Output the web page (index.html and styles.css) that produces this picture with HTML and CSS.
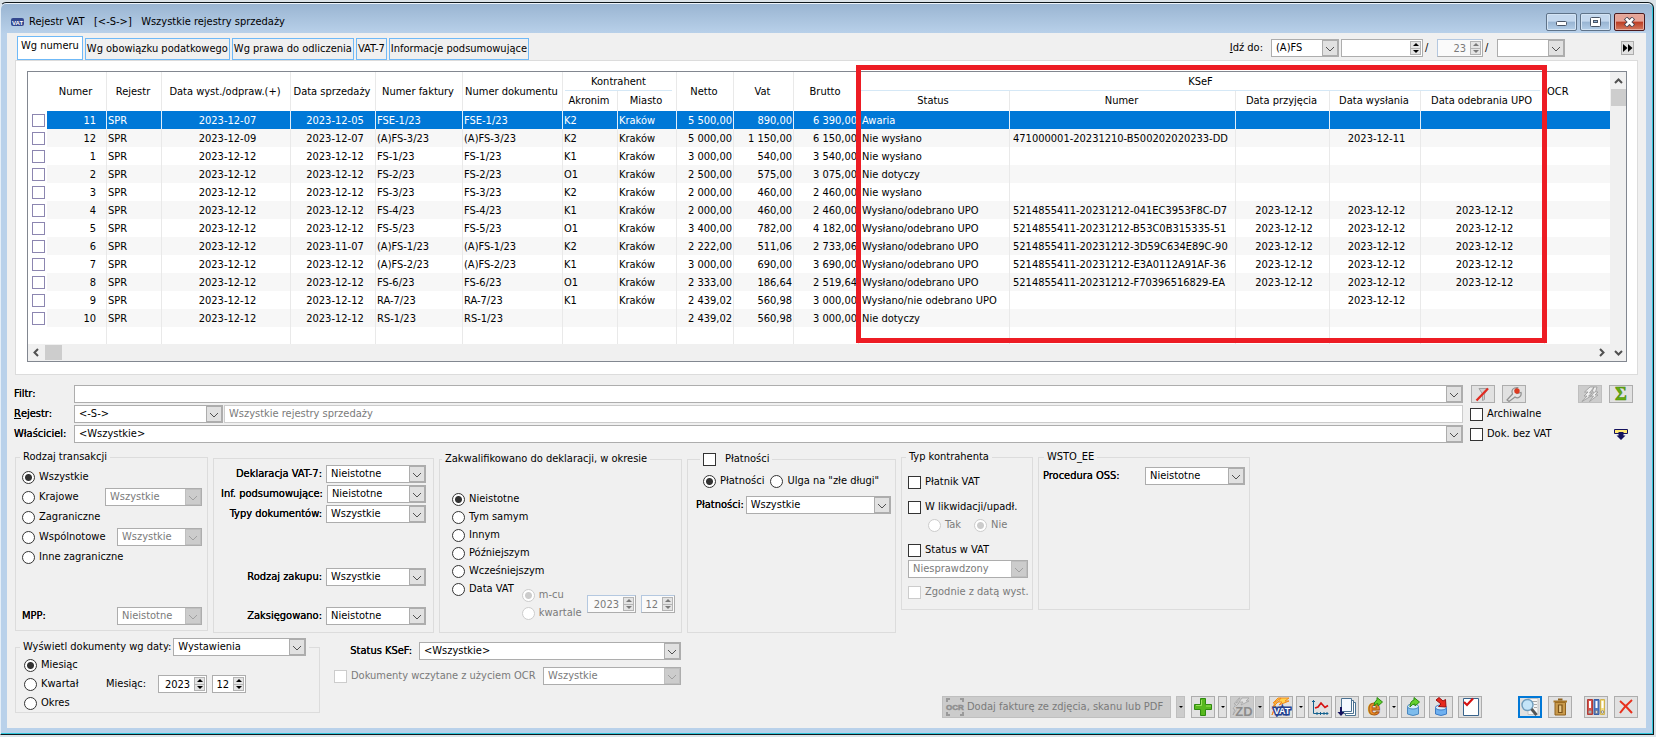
FILE: index.html
```html
<!DOCTYPE html>
<html lang="pl">
<head>
<meta charset="utf-8">
<title>Rejestr VAT</title>
<link rel="stylesheet" href="styles.css">
</head>
<body>
<div class="window">
<header class="titlebar">
  <svg class="app-icon" width="13" height="10" viewBox="0 0 13 10"><rect y="1" width="13" height="8" rx="2" fill="#34488f"/><text x="6.500" y="7.500" class="ico-text" font-size="6" fill="#fff" text-anchor="middle">VAT</text></svg>
  <h1>Rejestr VAT &nbsp; [&lt;-S-&gt;] &nbsp; Wszystkie rejestry sprzedaży</h1>
  <div class="win-buttons">
    <button aria-label="Minimalizuj"><svg width="13" height="10" viewBox="0 0 13 10"><rect x="1.500" y="4.500" width="10" height="4" rx="1" fill="#fff" stroke="#4a5566"/></svg></button>
    <button aria-label="Maksymalizuj"><svg width="13" height="10" viewBox="0 0 13 10"><rect x="1.500" y=".500" width="10" height="9" rx="1" fill="#fff" stroke="#4a5566"/><rect x="4.500" y="3.500" width="4" height="2" fill="#8fb0d4" stroke="#4a5566"/></svg></button>
    <button class="close" aria-label="Zamknij"><svg width="13" height="10" viewBox="0 0 13 10"><path d="M2.500 1l8 8M10.500 1l-8 8" stroke="#4a4552" stroke-width="4.500"/><path d="M3 1.500l7 7M10 1.500l-7 7" stroke="#fff" stroke-width="2.500"/></svg></button>
  </div>
</header>
<main class="content">
<div class="top-row">
  <nav class="tabs">
    <button class="tab active">Wg numeru</button>
    <button class="tab">Wg obowiązku podatkowego</button>
    <button class="tab">Wg prawa do odliczenia</button>
    <button class="tab">VAT-7</button>
    <button class="tab">Informacje podsumowujące</button>
  </nav>
  <div class="goto">
    <label for="goto-kind"><u>I</u>dź do:</label>
    <select id="goto-kind" class="w-kind"><option>(A)FS</option></select>
    <span class="spin w-no"><input type="text" aria-label="Numer"><span class="arrows"><button aria-label="Więcej"></button><button aria-label="Mniej"></button></span></span>
    <span class="slash">/</span>
    <span class="spin off w-yr"><input type="text" value="23" aria-label="Rok" disabled><span class="arrows"><button disabled aria-label="Więcej"></button><button disabled aria-label="Mniej"></button></span></span>
    <span class="slash">/</span>
    <select class="w-kind" aria-label="Seria"><option></option></select>
    <button class="ff" aria-label="Dalej"><svg width="11" height="10" viewBox="0 0 11 10"><path d="M1 1v8l4.500-4zM6 1v8l4.500-4z" fill="#000"/></svg></button>
  </div>
</div>
<section class="pane">
<div class="grid">
<div class="table-area">
<table>
<colgroup><col class="c-cb"><col class="c-num"><col class="c-rej"><col class="c-dw"><col class="c-ds"><col class="c-nf"><col class="c-nd"><col class="c-ak"><col class="c-mi"><col class="c-ne"><col class="c-vat"><col class="c-br"><col class="c-st"><col class="c-kn"><col class="c-dp"><col class="c-wy"><col class="c-upo"><col></colgroup>
<thead>
<tr><th rowspan="2" class="nb"></th><th rowspan="2">Numer</th><th rowspan="2">Rejestr</th><th rowspan="2">Data wyst./odpraw.(+)</th><th rowspan="2">Data sprzedaży</th><th rowspan="2">Numer faktury</th><th rowspan="2">Numer dokumentu</th><th colspan="2" class="group"><span>Kontrahent</span></th><th rowspan="2">Netto</th><th rowspan="2">Vat</th><th rowspan="2">Brutto</th><th colspan="5" class="group"><span>KSeF</span></th><th rowspan="2" class="ocr nb">OCR</th></tr>
<tr><th>Akronim</th><th>Miasto</th><th>Status</th><th>Numer</th><th>Data przyjęcia</th><th>Data wysłania</th><th>Data odebrania UPO</th></tr>
</thead>
<tbody>
<tr class="selected"><td><input type="checkbox" aria-label="11"><td>11<td>SPR<td>2023-12-07<td>2023-12-05<td>FSE-1/23<td>FSE-1/23<td>K2<td>Kraków<td>5 500,00<td>890,00<td>6 390,00<td>Awaria<td><td><td><td><td></tr>
<tr><td><input type="checkbox" aria-label="12"><td>12<td>SPR<td>2023-12-09<td>2023-12-07<td>(A)FS-3/23<td>(A)FS-3/23<td>K2<td>Kraków<td>5 000,00<td>1 150,00<td>6 150,00<td>Nie wysłano<td>471000001-20231210-B500202020233-DD<td><td>2023-12-11<td><td></tr>
<tr><td><input type="checkbox" aria-label="1"><td>1<td>SPR<td>2023-12-12<td>2023-12-12<td>FS-1/23<td>FS-1/23<td>K1<td>Kraków<td>3 000,00<td>540,00<td>3 540,00<td>Nie wysłano<td><td><td><td><td></tr>
<tr><td><input type="checkbox" aria-label="2"><td>2<td>SPR<td>2023-12-12<td>2023-12-12<td>FS-2/23<td>FS-2/23<td>O1<td>Kraków<td>2 500,00<td>575,00<td>3 075,00<td>Nie dotyczy<td><td><td><td><td></tr>
<tr><td><input type="checkbox" aria-label="3"><td>3<td>SPR<td>2023-12-12<td>2023-12-12<td>FS-3/23<td>FS-3/23<td>K2<td>Kraków<td>2 000,00<td>460,00<td>2 460,00<td>Nie wysłano<td><td><td><td><td></tr>
<tr><td><input type="checkbox" aria-label="4"><td>4<td>SPR<td>2023-12-12<td>2023-12-12<td>FS-4/23<td>FS-4/23<td>K1<td>Kraków<td>2 000,00<td>460,00<td>2 460,00<td>Wysłano/odebrano UPO<td>5214855411-20231212-041EC3953F8C-D7<td>2023-12-12<td>2023-12-12<td>2023-12-12<td></tr>
<tr><td><input type="checkbox" aria-label="5"><td>5<td>SPR<td>2023-12-12<td>2023-12-12<td>FS-5/23<td>FS-5/23<td>O1<td>Kraków<td>3 400,00<td>782,00<td>4 182,00<td>Wysłano/odebrano UPO<td>5214855411-20231212-B53C0B315335-51<td>2023-12-12<td>2023-12-12<td>2023-12-12<td></tr>
<tr><td><input type="checkbox" aria-label="6"><td>6<td>SPR<td>2023-12-12<td>2023-11-07<td>(A)FS-1/23<td>(A)FS-1/23<td>K2<td>Kraków<td>2 222,00<td>511,06<td>2 733,06<td>Wysłano/odebrano UPO<td>5214855411-20231212-3D59C634E89C-90<td>2023-12-12<td>2023-12-12<td>2023-12-12<td></tr>
<tr><td><input type="checkbox" aria-label="7"><td>7<td>SPR<td>2023-12-12<td>2023-12-12<td>(A)FS-2/23<td>(A)FS-2/23<td>K1<td>Kraków<td>3 000,00<td>690,00<td>3 690,00<td>Wysłano/odebrano UPO<td>5214855411-20231212-E3A0112A91AF-36<td>2023-12-12<td>2023-12-12<td>2023-12-12<td></tr>
<tr><td><input type="checkbox" aria-label="8"><td>8<td>SPR<td>2023-12-12<td>2023-12-12<td>FS-6/23<td>FS-6/23<td>O1<td>Kraków<td>2 333,00<td>186,64<td>2 519,64<td>Wysłano/odebrano UPO<td>5214855411-20231212-F70396516829-EA<td>2023-12-12<td>2023-12-12<td>2023-12-12<td></tr>
<tr><td><input type="checkbox" aria-label="9"><td>9<td>SPR<td>2023-12-12<td>2023-12-12<td>RA-7/23<td>RA-7/23<td>K1<td>Kraków<td>2 439,02<td>560,98<td>3 000,00<td>Wysłano/nie odebrano UPO<td><td><td>2023-12-12<td><td></tr>
<tr><td><input type="checkbox" aria-label="10"><td>10<td>SPR<td>2023-12-12<td>2023-12-12<td>RS-1/23<td>RS-1/23<td><td><td>2 439,02<td>560,98<td>3 000,00<td>Nie dotyczy<td><td><td><td><td></tr>
<tr class="rest"><td><td><td><td><td><td><td><td><td><td><td><td><td><td><td><td><td><td></tr>
</tbody>
</table>
<div class="highlight"></div>
</div>
<div class="vscroll"><svg width="9" height="6" viewBox="0 0 9 6"><path d="M1 5l3.500-3.500L8 5" stroke="#505050" stroke-width="2" fill="none"/></svg><span class="thumb"></span></div>
<div class="hscroll"><svg width="6" height="9" viewBox="0 0 6 9"><path d="M5 1L1.500 4.500 5 8" stroke="#505050" stroke-width="2" fill="none"/></svg><span class="thumb"></span><svg class="end" width="6" height="9" viewBox="0 0 6 9"><path d="M1 1l3.500 3.500L1 8" stroke="#505050" stroke-width="2" fill="none"/></svg></div>
<div class="corner"><svg width="9" height="6" viewBox="0 0 9 6"><path d="M1 1l3.500 3.500L8 1" stroke="#505050" stroke-width="2" fill="none"/></svg></div>
</div>
</section>

<section class="filters">
  <label class="strong" for="f-filtr">Filtr:</label>
  <select id="f-filtr"><option></option></select>
  <div class="side tools">
    <button class="sq" aria-label="Wyczyść filtr"><svg width="16" height="15" viewBox="0 0 16 15"><path d="M4 1.500h9L9.500 7v5.500l-2 1V7z" fill="#cfcfcf" stroke="#a0a0a0"/><path d="M1.500 13.500L13 1.500" stroke="#e02a20" stroke-width="2.200"/></svg></button>
    <button class="sq" aria-label="Konstruktor filtra"><svg width="18" height="16" viewBox="0 0 18 16"><path d="M2 14l5.500-6C6 4 8 1.500 12.500 1.500L10 4.500l2 3 4-1c1 4-3 6.500-6 4.500L4 15.500z" fill="#e4e4e4" stroke="#909090" stroke-width="1.200"/><circle cx="12" cy="5" r="2.700" fill="#dd3a20"/></svg></button>
    <button class="sq off push" aria-label="Filtruj" disabled><svg width="20" height="16" viewBox="0 0 20 16"><path d="M10 1L4.500 6H8l-4 4h3l-5 5.500L11 10H8.500L12 7H9.500L14 1zM17 1h-3l-2 5h2.500l-3.500 4h2.500l-4 5.500L18 9h-3l3-3h-2.500z" fill="#eee" stroke="#999" stroke-width=".800"/></svg></button>
    <button class="sq" aria-label="Suma"><svg width="14" height="16" viewBox="0 0 14 16"><text x="7" y="14" class="ico-serif" font-size="18" fill="#64ac0e" stroke="#4c8c08" stroke-width=".600" text-anchor="middle">Σ</text></svg></button>
  </div>
  <label class="strong" for="f-rejestr"><u>R</u>ejestr:</label>
  <div class="pair"><select id="f-rejestr"><option>&lt;-S-&gt;</option></select><input type="text" value="Wszystkie rejestry sprzedaży" aria-label="Nazwa rejestru" disabled></div>
  <div class="side"><label><input type="checkbox">Archiwalne</label></div>
  <label class="strong" for="f-wl">Właściciel:</label>
  <select id="f-wl"><option>&lt;Wszystkie&gt;</option></select>
  <div class="side"><label><input type="checkbox">Dok. bez VAT</label>
    <button class="bare push" aria-label="Zwiń"><svg width="16" height="13" viewBox="0 0 16 13"><path d="M1.500 1.500h13v4h-13z" fill="#ffe873" stroke="#14125e"/><path d="M5.500 4h5v3.500h2L8 12 3.500 7.500h2z" fill="#14125e"/></svg></button></div>
</section>

<section class="panels">
  <fieldset class="panel p1"><legend>Rodzaj transakcji</legend>
    <div class="line"><label><input type="radio" name="rt" checked>Wszystkie</label></div>
    <div class="line"><label><input type="radio" name="rt">Krajowe</label><select class="push w-krj" aria-label="Krajowe" disabled><option>Wszystkie</option></select></div>
    <div class="line"><label><input type="radio" name="rt">Zagraniczne</label></div>
    <div class="line"><label><input type="radio" name="rt">Wspólnotowe</label><select class="push w-wsp" aria-label="Wspólnotowe" disabled><option>Wszystkie</option></select></div>
    <div class="line"><label><input type="radio" name="rt">Inne zagraniczne</label></div>
    <div class="line last"><label class="strong" for="mpp">MPP:</label><select id="mpp" class="push w-wsp" disabled><option>Nieistotne</option></select></div>
  </fieldset>
  <div class="panel p2">
    <div class="line"><label class="strong" for="d7">Deklaracja VAT-7:</label><select id="d7"><option>Nieistotne</option></select></div>
    <div class="line"><label class="strong" for="ip">Inf. podsumowujące:</label><select id="ip"><option>Nieistotne</option></select></div>
    <div class="line"><label class="strong" for="td">Typy dokumentów:</label><select id="td"><option>Wszystkie</option></select></div>
    <div class="line second"><label class="strong" for="rz">Rodzaj zakupu:</label><select id="rz"><option>Wszystkie</option></select></div>
    <div class="line last"><label class="strong" for="zk">Zaksięgowano:</label><select id="zk"><option>Nieistotne</option></select></div>
  </div>
  <fieldset class="panel p3 low"><legend>Zakwalifikowano do deklaracji, w okresie</legend>
    <div class="line"><label><input type="radio" name="zk" checked>Nieistotne</label></div>
    <div class="line"><label><input type="radio" name="zk">Tym samym</label></div>
    <div class="line"><label><input type="radio" name="zk">Innym</label></div>
    <div class="line"><label><input type="radio" name="zk">Późniejszym</label></div>
    <div class="line"><label><input type="radio" name="zk">Wcześniejszym</label></div>
    <div class="vat-date">
      <div class="line"><label><input type="radio" name="zk">Data VAT</label></div>
      <div class="sub"><div class="line"><label class="off"><input type="radio" name="mk" checked disabled>m-cu</label></div><div class="line"><label class="off"><input type="radio" name="mk" disabled>kwartale</label></div></div>
      <div class="spins">
        <span class="spin off w-year"><input type="text" value="2023" aria-label="Rok VAT" disabled><span class="arrows"><button disabled aria-label="Więcej"></button><button disabled aria-label="Mniej"></button></span></span>
        <span class="spin off w-mon"><input type="text" value="12" aria-label="Miesiąc VAT" disabled><span class="arrows"><button disabled aria-label="Więcej"></button><button disabled aria-label="Mniej"></button></span></span>
      </div>
    </div>
  </fieldset>
  <fieldset class="panel p4 low"><legend><label><input type="checkbox">Płatności</label></legend>
    <div class="line"><label><input type="radio" name="pl" checked>Płatności</label><label><input type="radio" name="pl">Ulga na "złe długi"</label></div>
    <div class="line pay"><label class="strong" for="pls">Płatności:</label><select id="pls"><option>Wszystkie</option></select></div>
  </fieldset>
  <fieldset class="panel p5"><legend>Typ kontrahenta</legend>
    <div class="line"><label><input type="checkbox">Płatnik VAT</label></div>
    <div class="line likw"><label><input type="checkbox">W likwidacji/upadł.</label></div>
    <div class="line yesno"><label class="off"><input type="radio" name="lk" disabled>Tak</label><label class="off"><input type="radio" name="lk" checked disabled>Nie</label></div>
    <div class="line likw"><label><input type="checkbox">Status w VAT</label></div>
    <div class="line"><select aria-label="Status w VAT" disabled><option>Niesprawdzony</option></select></div>
    <div class="line wyst"><label class="off"><input type="checkbox" disabled>Zgodnie z datą wyst.</label></div>
  </fieldset>
  <fieldset class="panel p6"><legend>WSTO_EE</legend>
    <div class="line"><label class="strong" for="oss">Procedura OSS:</label><select id="oss" class="push"><option>Nieistotne</option></select></div>
  </fieldset>
</section>

<section class="bottom">
  <fieldset class="panel p7"><legend><label for="wd">Wyświetl dokumenty wg daty:</label><select id="wd"><option>Wystawienia</option></select></legend>
    <div class="period">
      <div class="choices">
        <div class="line"><label><input type="radio" name="ok" checked>Miesiąc</label></div>
        <div class="line"><label><input type="radio" name="ok">Kwartał</label></div>
        <div class="line"><label><input type="radio" name="ok">Okres</label></div>
      </div>
      <label for="rok">Miesiąc:</label>
      <span class="spin w-year"><input id="rok" type="text" value="2023"><span class="arrows"><button aria-label="Więcej"></button><button aria-label="Mniej"></button></span></span>
      <span class="spin w-mon"><input type="text" value="12" aria-label="Miesiąc"><span class="arrows"><button aria-label="Więcej"></button><button aria-label="Mniej"></button></span></span>
    </div>
  </fieldset>
  <div class="ksef">
    <div class="line"><label class="strong" for="sk">Status KSeF:</label><select id="sk" class="w-ksef"><option>&lt;Wszystkie&gt;</option></select></div>
    <div class="line"><label class="off"><input type="checkbox" disabled>Dokumenty wczytane z użyciem OCR</label><select class="w-ocr push" aria-label="OCR" disabled><option>Wszystkie</option></select></div>
  </div>
  <div class="toolbar">
    <button class="ocr-btn" disabled><svg width="20" height="20" viewBox="0 0 20 20"><path d="M2 5V2h3M15 2h3v3M2 15v3h3M15 18h3v-3" stroke="#9a9a9a" stroke-width="2" fill="none"/><text x="10" y="13" class="ico-text" font-size="8" fill="#8f8f8f" stroke="#8f8f8f" stroke-width=".500" text-anchor="middle">OCR</text></svg>Dodaj fakturę ze zdjęcia, skanu lub PDF</button>
    <button class="drop off m5" aria-label="Opcje OCR" disabled></button>
    <button class="tool m6" aria-label="Dodaj"><svg width="20" height="20" viewBox="0 0 20 20"><path d="M7.500 1.500h5v6h6v5h-6v6h-5v-6h-6v-5h6z" fill="#57b81e" stroke="#2f8a10"/><path d="M8.500 3v5.500H3M13 9h5" stroke="#9be05c" fill="none"/></svg></button>
    <button class="drop m3" aria-label="Opcje dodawania"></button>
    <button class="tool off m3" aria-label="Złe długi" disabled><svg width="22" height="20" viewBox="0 0 22 20"><path d="M9 1L5 6h3l-4 4h3L2 18l2-6H2l3-5H3l5-6zM18 1h-7L8 5h4l-2 3 8-4h-3z" fill="#e0e0e0" stroke="#a4a4a4" stroke-width=".800"/><text x="13" y="19" class="ico-text" font-size="13" fill="#8c8c8c" stroke="#ccc" stroke-width="2" paint-order="stroke" text-anchor="middle">ZD</text></svg></button>
    <button class="drop off m1" aria-label="Opcje złych długów" disabled></button>
    <button class="tool m5" aria-label="VAT"><svg width="22" height="20" viewBox="0 0 22 20"><path d="M11 1L5 5h3L4 9h2L2 18l2-6H2l3-6H3l5-5zM19 1h-8L8 5h4L9 8l10-4h-4z" fill="#ffd34d" stroke="#f08a1c"/><text x="12" y="17" class="ico-text" font-size="9" fill="#fff" stroke="#23408f" stroke-width="3" paint-order="stroke" text-anchor="middle">VAT</text></svg></button>
    <button class="drop m3" aria-label="Opcje VAT"></button>
    <button class="tool m3" aria-label="Wykres"><svg width="20" height="20" viewBox="0 0 20 20"><path d="M3.500 3v13.500H18M2 5l1.500-1.500L5 5M16.500 15l1.500 1.500-1.500 1.500M7 15v3M10.500 15v3M14 15v3" stroke="#15628f" fill="none"/><path d="M5 11l3-1 3-4 4 4.500 3-2" stroke="#d61111" stroke-width="1.700" fill="none"/></svg></button>
    <button class="tool m3" aria-label="Dokumenty"><svg width="20" height="20" viewBox="0 0 20 20"><path d="M8.500 5.500h10v13h-10z" fill="#fff" stroke="#4a7191"/><path d="M6.500 3.500h10v13h-10z" fill="#fff" stroke="#4a7191"/><path d="M4.500 1.500h10v13h-10z" fill="#f4f8ff" stroke="#4a7191"/><path d="M3 10v5H.500L4 19l3.500-4H5v-5z" fill="#14125e"/></svg></button>
    <button class="tool m4" aria-label="E-deklaracja"><svg width="20" height="20" viewBox="0 0 20 20"><text x="9" y="18" class="ico-text" font-size="22" fill="#f0932c" stroke="#a8560c" stroke-width="1" text-anchor="middle">e</text><path d="M9 9q0-5 3-6V.500L17.500 5 13 9V6.500q-2.500 0-4 2.500z" fill="#63d02c" stroke="#2b8a12"/></svg></button>
    <button class="drop m2" aria-label="Opcje e-deklaracji"></button>
    <button class="tool m3" aria-label="Eksport"><svg width="20" height="20" viewBox="0 0 20 20"><path d="M4.500 9.500v7.500q5.500 3 11 0V9.500z" fill="#7ebcec" stroke="#4a88c0"/><ellipse cx="10" cy="9.500" rx="5.500" ry="2.500" fill="#d8ecfa" stroke="#4a88c0"/><path d="M7 10q0-6 4-7V.500L16.500 5 12 9V7q-3 0-5 3z" fill="#63d02c" stroke="#2b8a12"/></svg></button>
    <button class="tool m4" aria-label="Import"><svg width="20" height="20" viewBox="0 0 20 20"><path d="M4.500 10v7q5.500 3 11 0v-7z" fill="#6eb0f0" stroke="#3f7cc4"/><ellipse cx="10" cy="10.500" rx="5.500" ry="2.500" fill="#d8ecfa" stroke="#3f7cc4"/><path d="M5 3l3-2.500 4 3.500 2.500-1.500.500 7.500-7.500-.500L10 7z" fill="#e6281c" stroke="#9a1010"/></svg></button>
    <button class="tool m5" aria-label="Zaznacz"><svg width="20" height="20" viewBox="0 0 20 20"><path d="M3.500 1.500h15v17h-15z" fill="#fff" stroke="#38638c"/><path d="M4 5l3 3 6-6.500" stroke="#d61111" stroke-width="2.200" fill="none"/></svg></button>
    <button class="tool focus gap-xl" aria-label="Podgląd"><svg width="20" height="20" viewBox="0 0 20 20"><path d="M8 1.500h10v16H8z" fill="#f6f6f6" stroke="#c4c4c4"/><path d="M12 4.500h5M14 7.500h3M14 10.500h3" stroke="#aaa"/><circle cx="7.500" cy="8" r="5.500" fill="#c4e4f8" stroke="#6f9cbc" stroke-width="1.400"/><path d="M11.500 12l5 6" stroke="#555" stroke-width="2.800"/></svg></button>
    <button class="tool m6" aria-label="Usuń"><svg width="20" height="20" viewBox="0 0 20 20"><path d="M5 5.500h10.500v12.500H5z" fill="#c99a4c" stroke="#91631e"/><path d="M3.500 4.500h13.500" stroke="#a67628" stroke-width="2"/><path d="M8 2.500h4.500" stroke="#91631e" stroke-width="2"/><path d="M8.500 8v7.500h3.500V8z" fill="#e8c888" stroke="#7a5218" stroke-width="1.200"/></svg></button>
    <button class="tool gap-lg" aria-label="Segregatory"><svg width="20" height="20" viewBox="0 0 20 20"><path d="M1.500 2.500h5v15h-5z" fill="#d4544c" stroke="#b03c36"/><path d="M8 2.500h5v15H8z" fill="#4f78c0" stroke="#3a5ea4"/><path d="M14.500 2.500h4v15h-4z" fill="#f2dc80" stroke="#d2b450"/><path d="M3 4h2v7H3zM9.500 4h2v7h-2zM15.500 4h2v7h-2z" fill="#fff"/><circle cx="4" cy="15" r="1.300" fill="#eee" stroke="#888"/><circle cx="10.500" cy="15" r="1.300" fill="#eee" stroke="#888"/><circle cx="16.500" cy="15" r="1.300" fill="#eee" stroke="#888"/></svg></button>
    <button class="tool m6" aria-label="Zamknij okno"><svg width="18" height="18" viewBox="0 0 18 18"><path d="M3 3q6 5 12 12M15 2Q8 8 3 15" stroke="#e8301c" stroke-width="2" fill="none"/></svg></button>
  </div>
</section>
</main>
</div>
</body>
</html>
```
FILE: styles.css
```css
* { box-sizing: border-box; }

body {
  margin: 0;
  min-height: 100vh;
  display: flex;
  flex-direction: column;
  background: #dce3e8;
  color: #000;
  font: 11px/14px "DejaVu Sans Condensed", "DejaVu Sans", sans-serif;
}

button, input, select { font: inherit; color: inherit; margin: 0; padding: 0; }
svg { display: block; flex: none; }
.ico-text { font-family: "Liberation Sans Narrow", "Liberation Sans", sans-serif; font-weight: 700; }
.ico-serif { font-family: "Liberation Serif", serif; font-weight: 700; }
.push { margin-left: auto; }
.strong { text-shadow: 0 0 0 #000; }
.off { color: #7a7a7a; }

/* Window frame */
.window {
  flex: 1;
  display: flex;
  flex-direction: column;
  margin: 2px 2px 2px 0;
  padding: 0 6px 6px;
  border: 1px solid #10181c;
  border-left-color: #e4eef8;
  border-radius: 6px 6px 0 0;
  background: linear-gradient(#99b4d1, #b9d1ea 31px, #b9d1ea);
  box-shadow: inset -1px -1px 0 #2fc6dc, inset 0 1px 0 #eef4fa;
}
.titlebar { display: flex; align-items: center; height: 30px; padding: 7px 2px 0 4px; gap: 5px; }
.titlebar h1 { margin: 0; flex: 1; font-size: 11px; font-weight: 400; }
.win-buttons { display: flex; gap: 3px; }
.win-buttons button {
  display: flex; align-items: center; justify-content: center;
  width: 31px; height: 18px;
  border: 1px solid #5f7389; border-radius: 2px;
  background: linear-gradient(#c4d8ee 45%, #98b4d2 50%, #b4cee8);
  box-shadow: inset 0 0 0 1px #d4e4f4;
}
.win-buttons .close {
  border-color: #4c1a1e;
  background: linear-gradient(#e6a498 45%, #bc3c22 50%, #d47a60);
  box-shadow: inset 0 0 0 1px #e4aca0;
}

.content { flex: 1; padding: 0 8px; background: #f0f0f0; margin-right: 1px; }

/* Tabs and document lookup */
.top-row { display: flex; justify-content: space-between; height: 27px; padding-left: 2px; }
.tabs { display: flex; align-items: flex-end; gap: 2px; }
.tab {
  height: 22px; margin-bottom: 0; padding: 0 1px;
  border: 1px solid #6fb9f7; background: #f0f0f0; white-space: nowrap;
}
.tab.active { height: 24px; margin: 0; padding: 0 3px 4px; background: #fff; }
.goto { display: flex; align-items: center; gap: 2px; padding: 3px 4px 0 0; }
.goto label { margin-right: 6px; }
.slash { width: 6px; }
.goto .w-yr { margin-left: 4px; }
.goto .w-kind { width: 68px; }
.slash + .w-kind { margin-left: 4px; }
.w-no { width: 82px; }
.w-yr { width: 46px; }
.ff {
  display: flex; align-items: center; justify-content: center;
  width: 13px; height: 14px; margin-left: 54px;
  border: 1px solid #adadad; background: #e1e1e1;
}

/* Controls */
select {
  appearance: none;
  height: 18px;
  padding: 0 20px 0 4px;
  border: 1px solid #adadad;
  border-radius: 0;
  background: #fff url("data:image/svg+xml,%3Csvg xmlns='http://www.w3.org/2000/svg' width='16' height='16'%3E%3Crect width='16' height='16' fill='%23adadad'/%3E%3Crect x='1' y='1' width='14' height='14' fill='%23e1e1e1'/%3E%3Cpath d='M4 7l4 4 4-4' fill='none' stroke='%23505050'/%3E%3C/svg%3E") right center no-repeat;
  opacity: 1;
}
select:disabled {
  color: #7a7a7a;
  background-image: url("data:image/svg+xml,%3Csvg xmlns='http://www.w3.org/2000/svg' width='16' height='16'%3E%3Crect width='16' height='16' fill='%23bfbfbf'/%3E%3Crect x='1' y='1' width='14' height='14' fill='%23cccccc'/%3E%3Cpath d='M4 7l4 4 4-4' fill='none' stroke='%23a0a0a0'/%3E%3C/svg%3E");
}
input[type="checkbox"], input[type="radio"] {
  appearance: none; flex: none;
  width: 13px; height: 13px;
  border: 1px solid #333; background: #fff;
}
input[type="radio"] { border-radius: 50%; }
input[type="radio"]:checked { background: radial-gradient(circle, #333 3px, #fff 4px); }
input[type="checkbox"]:disabled, input[type="radio"]:disabled { border-color: #ccc; }
input[type="radio"]:checked:disabled { background: radial-gradient(circle, #ccc 3px, #fff 4px); }
label { display: inline-flex; align-items: center; gap: 4px; white-space: nowrap; }
label > u { margin-right: -4px; }
.spin {
  display: inline-flex; align-items: center;
  height: 18px; padding-right: 1px;
  border: 1px solid #adadad; background: #fff;
}
.spin input { flex: 1; min-width: 0; width: 0; height: 16px; border: 0; background: none; text-align: right; padding-right: 4px; }
.spin.off { border-color: #b4c8e0 #adadad #adadad #b4c8e0; background: #fafafa; }
.arrows { display: flex; flex-direction: column; width: 11px; height: 14px; background: #e4e4e4; border: 1px solid #b4b4b4; }
.arrows button { flex: 1; display: flex; align-items: center; justify-content: center; border: 0; background: none; }
.arrows button + button { border-top: 1px solid #b4b4b4; }
.arrows button::before { content: ""; border: 3px solid transparent; border-top: 0; border-bottom-color: currentColor; }
.arrows button + button::before { border: 3px solid transparent; border-bottom: 0; border-top-color: currentColor; }
.w-year { width: 49px; }
.w-mon { width: 34px; }

/* Register grid */
.pane { padding: 10px 10px 12px 11px; border: 1px solid #dcdcdc; background: #fff; }
.grid {
  display: grid;
  grid-template: 1fr 17px / 1fr 16px;
  border: 1px solid #828790;
}
.table-area { position: relative; min-width: 0; }
table { width: 100%; table-layout: fixed; border-collapse: separate; border-spacing: 0; }
th, td { padding: 0; font-weight: 400; white-space: nowrap; border-right: 1px solid #e9e9e9; }
th { text-align: center; height: 20px; padding-right: 2px; }
thead tr:first-child th { height: 19px; }
thead tr:first-child .group { padding: 0 4px 0 2px; }
.group span { display: block; height: 19px; padding-top: 3px; border-bottom: 1px solid #d5e8f6; }
thead .ocr { text-align: left; padding-left: 2px; }
.nb, td:first-child, td:last-child { border-right: 0; }
td { height: 18px; padding: 1px 0 0 1px; }
tbody tr:nth-child(even) td:not(:first-child) { background: #f7f7f7; }
tbody .selected td { border-color: #e0eefa; }
tbody .selected td:not(:first-child) { background: #0078d7; color: #fff; }
td:nth-child(1) { padding: 0 0 0 4px; }
td:nth-child(2) { text-align: right; padding-right: 10px; }
td:nth-child(4), td:nth-child(15), td:nth-child(16) { text-align: center; padding-left: 3px; }
td:nth-child(17), td:nth-child(5) { text-align: center; padding-left: 4px; }
td:nth-child(10), td:nth-child(11), td:nth-child(12) { text-align: right; padding-right: 1px; }
td:nth-child(13), td:nth-child(14) { padding-left: 3px; }
td input[type="checkbox"] { display: block; border-color: #8c86b0; }
tbody .rest td { height: 17px; background: #fff; }
.c-cb { width: 19px; } .c-num { width: 60px; } .c-rej { width: 55px; } .c-dw { width: 129px; }
.c-ds { width: 85px; } .c-nf { width: 87px; } .c-nd { width: 100px; } .c-ak { width: 55px; }
.c-mi { width: 59px; } .c-ne { width: 57px; } .c-vat { width: 60px; } .c-br { width: 65px; }
.c-st { width: 151px; } .c-kn { width: 226px; } .c-dp { width: 94px; } .c-wy { width: 91px; }
.c-upo { width: 124px; }
.highlight { position: absolute; left: 828px; top: -7px; bottom: 1px; width: 691px; border: 5px solid #ed1c24; }
.vscroll, .hscroll, .corner { display: flex; align-items: center; background: #f0f0f0; }
.vscroll { flex-direction: column; padding-top: 6px; }
.vscroll .thumb { width: 15px; height: 17px; margin-top: 5px; background: #cdcdcd; }
.hscroll { padding: 0 5px; }
.hscroll .thumb { width: 17px; height: 15px; margin-left: 6px; background: #cdcdcd; }
.hscroll .end { margin-left: auto; }
.corner { justify-content: center; }

/* Filter rows */
.filters {
  display: grid;
  grid-template-columns: 59px 1fr 175px;
  grid-auto-rows: 18px;
  row-gap: 2px;
  margin-top: 10px;
}
.filters > label { margin-left: -1px; }
.pair { display: flex; gap: 1px; }
.pair select { width: 149px; }
.pair input { flex: 1; padding: 0 4px; border: 1px solid #ccc; background: #fff; color: #7a7a7a; }
.side { display: flex; align-items: center; padding: 0 9px 0 7px; }
.side.tools { gap: 7px; padding: 0 5px 0 8px; }
.sq {
  display: flex; align-items: center; justify-content: center;
  width: 24px; height: 18px;
  border: 1px solid #adadad; background: #e1e1e1;
}
.sq.off { background: #ccc; border-color: #bfbfbf; }
.bare { border: 0; background: none; }

/* Option panels */
.panels { display: flex; align-items: flex-start; gap: 5px; margin-top: 7px; }
.panel { display: flex; flex-direction: column; margin: 0; padding: 0; border: 1px solid #dcdcdc; min-width: 0; }
legend { height: 14px; margin-left: -2px; padding: 0 3px; white-space: nowrap; }
.line { display: flex; align-items: center; height: 18px; }
.panel .last { margin-top: auto; }
.low { margin-top: 2px; }
.p1 { width: 193px; height: 181px; gap: 2px; padding: 4px 5px 5px 6px; }
.w-krj { width: 97px; }
.w-wsp { width: 85px; }
.p2 { width: 221px; height: 175px; gap: 2px; margin-top: 8px; padding: 6px 7px 7px; }
.p2 .line { justify-content: flex-end; gap: 4px; }
.p2 select { width: 100px; }
.p2 .second { margin-top: 43px; }
.p3 { width: 243px; height: 181px; padding: 24px 6px 0 12px; }
.p3 legend { margin-left: -10px; }
.vat-date { display: flex; }
.sub { margin: 6px 0 0 8px; }
.spins { display: flex; align-items: center; gap: 5px; margin: 6px 0 0 auto; }
.p4 { width: 209px; height: 181px; gap: 6px; padding: 6px 4px 0 8px; }
.p4 legend { margin-left: 4px; }
.p4 legend label { gap: 9px; }
.p4 .line:first-of-type { gap: 6px; padding-left: 7px; }
.pay select { flex: 1; margin-left: 2px; }
.p5 { width: 132px; height: 160px; padding: 9px 4px 0 6px; }
.p5 select { width: 100%; margin-top: 2px; }
.likw { margin-top: 7px; }
.yesno { gap: 13px; padding-left: 20px; }
.wyst { margin-top: 6px; }
.p6 { width: 212px; height: 160px; padding: 3px 4px 0; }
.p6 legend { margin-left: 1px; }
.p6 select { width: 100px; }

/* Bottom strip */
.bottom { display: flex; align-items: flex-start; margin-top: 5px; padding-bottom: 10px; }
.p7 { width: 305px; height: 75px; padding: 0 0 0 8px; }
.p7 legend { display: flex; align-items: center; gap: 2px; height: 18px; margin-left: -4px; }
.p7 legend select { width: 133px; }
.period { display: flex; align-items: center; gap: 5px; }
.choices { width: 77px; display: grid; row-gap: 1px; }
.period > label { margin-right: 7px; }
.ksef { display: grid; row-gap: 7px; width: 347px; margin: 4px 0 0 14px; }
.ksef .line:first-child { justify-content: flex-end; gap: 7px; }
.w-ksef { width: 262px; }
.w-ocr { width: 138px; }
.toolbar { display: flex; align-items: center; margin: 58px 0 0 auto; }
.tool, .drop, .ocr-btn {
  display: flex; align-items: center; justify-content: center;
  height: 22px; border: 1px solid #adadad; background: #e1e1e1;
}
.tool { width: 24px; }
.tool.off, .drop.off, .ocr-btn { background: #ccc; border-color: #bfbfbf; }
.drop { width: 9px; }
.drop::before { content: ""; border: 2px solid transparent; border-top-color: #000; border-bottom: 0; }
.ocr-btn { width: 229px; justify-content: flex-start; padding-left: 2px; gap: 2px; color: #7a7a7a; }
.focus { border: 2px solid #0078d7; }
.m1 { margin-left: 1px; }
.m2 { margin-left: 2px; }
.m3 { margin-left: 3px; }
.m4 { margin-left: 4px; }
.m5 { margin-left: 5px; }
.m6 { margin-left: 6px; }
.gap-lg { margin-left: 12px; }
.gap-xl { margin-left: 36px; }
```
